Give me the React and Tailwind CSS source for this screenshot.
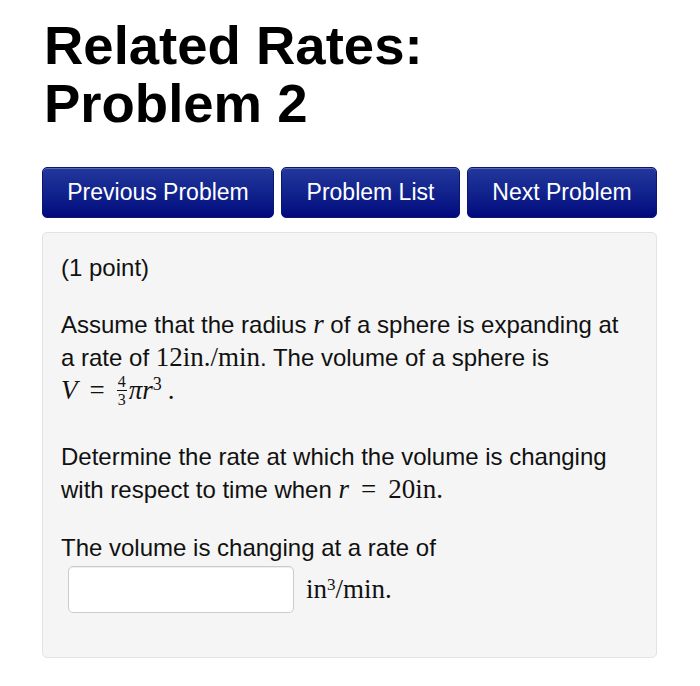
import React from "react";

const sans = { fontFamily: '"Liberation Sans", Arial, sans-serif' };
const serif = { fontFamily: '"Liberation Serif", "Times New Roman", serif' };

function NavButton({ label, width }) {
  return (
    <button
      className={`h-[51px] ${width} rounded-[5px] border border-[#0a1670] bg-gradient-to-b from-[#24379c] to-[#04067e] text-[23px] text-white shadow-[inset_0_1px_0_rgba(255,255,255,0.25)]`}
    >
      {label}
    </button>
  );
}

// inline math in a serif face, like the rendered TeX
function M({ children }) {
  return (
    <span style={serif} className="text-[27px]">
      {children}
    </span>
  );
}

export default function App() {
  return (
    <div style={sans} className="min-h-[686px] bg-white px-[42px] pt-[17px] text-black">
      <h1 className="pl-[2px] text-[54.5px] font-bold leading-[58px]">
        Related Rates:
        <br />
        Problem 2
      </h1>

      <div className="mt-[34px] flex gap-[7px]">
        <NavButton label="Previous Problem" width="w-[232px]" />
        <NavButton label="Problem List" width="w-[179px]" />
        <NavButton label="Next Problem" width="w-[190px]" />
      </div>

      <div className="mt-[14px] w-[615px] rounded-[5px] border border-[#e3e3e3] bg-[#f5f5f5] px-[18px] pb-[44px] pt-[18px] text-[24px] leading-[33px] text-[#111]">
        <p>(1 point)</p>

        <p className="mt-[24px]">
          Assume that the radius{" "}
          <M>
            <i>r</i>
          </M>{" "}
          of a sphere is expanding at
          <br />
          a rate of <M>12in./min</M>. The volume of a sphere is
          <br />
          <M>
            <i>V</i>
            <span className="mx-[12px]">=</span>
            <span className="relative top-[-2px] inline-flex flex-col items-center align-middle text-[16px] leading-[15px]">
              <span>4</span>
              <span className="my-[1px] h-px w-[10px] bg-[#111]" />
              <span>3</span>
            </span>
            <i className="ml-[2px]">πr</i>
            <sup className="text-[18px]">3</sup>
            <span className="ml-[6px]">.</span>
          </M>
        </p>

        <p className="mt-[31px]">
          Determine the rate at which the volume is changing
          <br />
          with respect to time when{" "}
          <M>
            <i>r</i>
            <span className="mx-[12px]">=</span>20in.
          </M>
        </p>

        <p className="mt-[25px]">
          The volume is changing at a rate of
          <br />
          <span className="mt-[2px] inline-flex items-center">
            <input
              type="text"
              className="ml-[7px] h-[47px] w-[226px] rounded-[5px] border border-[#cccccc] bg-white shadow-[inset_0_1px_1px_rgba(0,0,0,0.075)] outline-none"
            />
            <span style={serif} className="ml-[12px] text-[27px]">
              in<sup className="text-[17px]">3</sup>/min.
            </span>
          </span>
        </p>
      </div>
    </div>
  );
}
